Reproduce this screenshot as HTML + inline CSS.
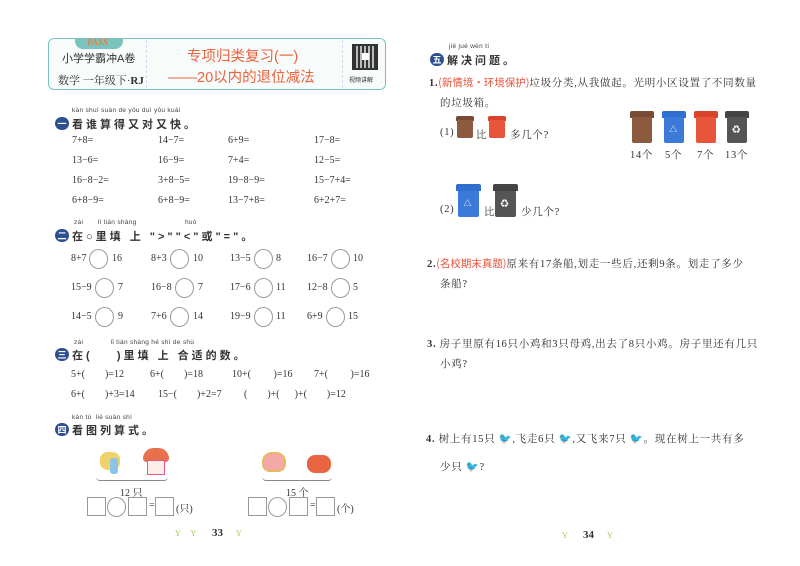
<!DOCTYPE html>
<html><head><meta charset="utf-8"><style>
*{margin:0;padding:0;box-sizing:border-box}
body{width:800px;height:566px;background:#fff;position:relative;overflow:hidden;font-family:"Liberation Serif","Noto Serif CJK SC",serif;color:#333;font-size:10px}
.a{position:absolute;white-space:nowrap}
.r{font-size:10.5px;letter-spacing:.7px}
.s{font-family:"Liberation Sans","Noto Sans CJK SC",sans-serif}
.py{font-family:"Liberation Sans",sans-serif;font-size:6.5px;color:#444;letter-spacing:.3px}
.tt{font-family:"Liberation Sans","Noto Sans CJK SC",sans-serif;font-weight:bold;font-size:11px;letter-spacing:3px;color:#333}
.bd{position:absolute;width:14px;height:13px;border-radius:7px;background:#2f4f93;color:#fff;font-size:9px;line-height:13px;text-align:center;font-family:"Noto Sans CJK SC",sans-serif;font-weight:bold}
.c{position:absolute;width:19px;height:20px;border:1px solid #999;border-radius:50%}
.bx{position:absolute;width:19px;height:19px;border:1px solid #999}
.red{color:#e8533a;font-family:"Noto Sans CJK SC",sans-serif;letter-spacing:0}
.bin{position:absolute}
.bin i{position:absolute;left:0;right:0;top:0;height:22%;border-radius:2px 2px 0 0}
.bin b{position:absolute;left:8%;right:8%;top:20%;bottom:0;border-radius:0 0 2px 2px}
.bin u{position:absolute;left:30%;top:48%;color:#fff;font-size:8px;text-decoration:none;line-height:1}
</style></head><body>
<!-- header -->
<div class="a" style="left:48px;top:38px;width:338px;height:52px;border:1.5px solid #7cc2bc;border-radius:6px;background:#f7fbfa"></div>
<div class="a" style="left:75px;top:38px;width:48px;height:11px;background:#7cc3bd;border-radius:0 0 8px 8px"></div>
<div class="a" style="left:87px;top:37px;font-size:9px;font-weight:bold;color:#e67e3b;font-style:italic">PASS</div>
<div class="a s" style="left:62px;top:50px;font-size:11px;color:#333">小学学霸冲A卷</div>
<div class="a" style="left:58px;top:72px;font-size:11px;color:#333">数学 一年级下·<b>RJ</b></div>
<div class="a" style="left:146px;top:40px;height:48px;border-left:1px dashed #cde"></div>
<div class="a" style="left:342px;top:40px;height:48px;border-left:1px dashed #cde"></div>
<div class="a s" style="left:187px;top:45px;font-size:14.5px;color:#e8643f">专项归类复习(一)</div>
<div class="a s" style="left:168px;top:66px;font-size:14.5px;color:#e8643f">——20以内的退位减法</div>
<div class="a" style="left:352px;top:44px;width:26px;height:26px;background:repeating-linear-gradient(90deg,#333 0 2px,#bbb 2px 4px);border:2px solid #333"></div>
<div class="a" style="left:362px;top:53px;width:7px;height:7px;background:#fff"></div>
<div class="a s" style="left:349px;top:75px;font-size:6px">视频讲解</div>

<!-- 一 -->
<div class="a py" style="left:72px;top:107px">kàn shuí suàn de yōu duì yōu kuài</div>
<div class="bd" style="left:55px;top:117px">一</div>
<div class="a tt" style="left:72px;top:116px">看谁算得又对又快。</div>
<div class="a" style="left:72px;top:135px">7+8=</div><div class="a" style="left:158px;top:135px">14−7=</div><div class="a" style="left:228px;top:135px">6+9=</div><div class="a" style="left:314px;top:135px">17−8=</div>
<div class="a" style="left:72px;top:155px">13−6=</div><div class="a" style="left:158px;top:155px">16−9=</div><div class="a" style="left:228px;top:155px">7+4=</div><div class="a" style="left:314px;top:155px">12−5=</div>
<div class="a" style="left:72px;top:175px">16−8−2=</div><div class="a" style="left:158px;top:175px">3+8−5=</div><div class="a" style="left:228px;top:175px">19−8−9=</div><div class="a" style="left:314px;top:175px">15−7+4=</div>
<div class="a" style="left:72px;top:195px">6+8−9=</div><div class="a" style="left:158px;top:195px">6+8−9=</div><div class="a" style="left:228px;top:195px">13−7+8=</div><div class="a" style="left:314px;top:195px">6+2+7=</div>

<!-- 二 -->
<div class="a py" style="left:74px;top:219px">zài &nbsp;&nbsp;&nbsp;&nbsp;&nbsp;&nbsp;lǐ tián shàng &nbsp;&nbsp;&nbsp;&nbsp;&nbsp;&nbsp;&nbsp;&nbsp;&nbsp;&nbsp;&nbsp;&nbsp;&nbsp;&nbsp;&nbsp;&nbsp;&nbsp;&nbsp;&nbsp;&nbsp;&nbsp;&nbsp;huò</div>
<div class="bd" style="left:55px;top:229px">二</div>
<div class="a tt" style="left:72px;top:228px">在○里填 上 "&gt;""&lt;"或"="。</div>
<div class="a" style="left:71px;top:253px">8+7</div><div class="c" style="left:89px;top:249px"></div><div class="a" style="left:112px;top:253px">16</div>
<div class="a" style="left:151px;top:253px">8+3</div><div class="c" style="left:170px;top:249px"></div><div class="a" style="left:193px;top:253px">10</div>
<div class="a" style="left:230px;top:253px">13−5</div><div class="c" style="left:254px;top:249px"></div><div class="a" style="left:276px;top:253px">8</div>
<div class="a" style="left:307px;top:253px">16−7</div><div class="c" style="left:331px;top:249px"></div><div class="a" style="left:353px;top:253px">10</div>
<div class="a" style="left:71px;top:282px">15−9</div><div class="c" style="left:95px;top:278px"></div><div class="a" style="left:118px;top:282px">7</div>
<div class="a" style="left:151px;top:282px">16−8</div><div class="c" style="left:175px;top:278px"></div><div class="a" style="left:198px;top:282px">7</div>
<div class="a" style="left:230px;top:282px">17−6</div><div class="c" style="left:254px;top:278px"></div><div class="a" style="left:276px;top:282px">11</div>
<div class="a" style="left:307px;top:282px">12−8</div><div class="c" style="left:331px;top:278px"></div><div class="a" style="left:353px;top:282px">5</div>
<div class="a" style="left:71px;top:311px">14−5</div><div class="c" style="left:95px;top:307px"></div><div class="a" style="left:118px;top:311px">9</div>
<div class="a" style="left:151px;top:311px">7+6</div><div class="c" style="left:170px;top:307px"></div><div class="a" style="left:193px;top:311px">14</div>
<div class="a" style="left:230px;top:311px">19−9</div><div class="c" style="left:254px;top:307px"></div><div class="a" style="left:276px;top:311px">11</div>
<div class="a" style="left:307px;top:311px">6+9</div><div class="c" style="left:326px;top:307px"></div><div class="a" style="left:348px;top:311px">15</div>

<!-- 三 -->
<div class="a py" style="left:74px;top:339px">zài &nbsp;&nbsp;&nbsp;&nbsp;&nbsp;&nbsp;&nbsp;&nbsp;&nbsp;&nbsp;&nbsp;&nbsp;lǐ tián shàng hé shì de shù</div>
<div class="bd" style="left:55px;top:348px">三</div>
<div class="a tt" style="left:72px;top:347px">在(&nbsp;&nbsp;&nbsp;&nbsp;)里填 上 合适的数。</div>
<div class="a" style="left:71px;top:369px">5+(&nbsp;&nbsp;&nbsp;&nbsp;&nbsp;&nbsp;&nbsp;&nbsp;)=12</div>
<div class="a" style="left:150px;top:369px">6+(&nbsp;&nbsp;&nbsp;&nbsp;&nbsp;&nbsp;&nbsp;&nbsp;)=18</div>
<div class="a" style="left:232px;top:369px">10+(&nbsp;&nbsp;&nbsp;&nbsp;&nbsp;&nbsp;&nbsp;&nbsp;&nbsp;)=16</div>
<div class="a" style="left:314px;top:369px">7+(&nbsp;&nbsp;&nbsp;&nbsp;&nbsp;&nbsp;&nbsp;&nbsp;&nbsp;)=16</div>
<div class="a" style="left:71px;top:389px">6+(&nbsp;&nbsp;&nbsp;&nbsp;&nbsp;&nbsp;&nbsp;&nbsp;)+3=14</div>
<div class="a" style="left:158px;top:389px">15−(&nbsp;&nbsp;&nbsp;&nbsp;&nbsp;&nbsp;&nbsp;&nbsp;)+2=7</div>
<div class="a" style="left:244px;top:389px">(&nbsp;&nbsp;&nbsp;&nbsp;&nbsp;&nbsp;&nbsp;&nbsp;)+(&nbsp;&nbsp;&nbsp;&nbsp;&nbsp;&nbsp;)+(&nbsp;&nbsp;&nbsp;&nbsp;&nbsp;&nbsp;&nbsp;&nbsp;)=12</div>

<!-- 四 -->
<div class="a py" style="left:72px;top:414px">kàn tú &nbsp;liè suàn shì</div>
<div class="bd" style="left:55px;top:423px">四</div>
<div class="a tt" style="left:72px;top:422px">看图列算式。</div>
<div class="a" style="left:100px;top:452px;width:20px;height:18px;background:#f1d26a;border-radius:40%"></div>
<div class="a" style="left:110px;top:458px;width:8px;height:16px;background:#8cc4e8;border-radius:3px"></div>
<div class="a" style="left:143px;top:448px;width:26px;height:14px;background:#e9704f;border-radius:12px 12px 4px 4px"></div>
<div class="a" style="left:147px;top:460px;width:18px;height:15px;background:#fbeee8;border:1px solid #e58"></div>
<div class="a" style="left:96px;top:477px;width:72px;height:4px;border-bottom:1px solid #888;border-radius:0 0 40px 40px"></div>
<div class="a" style="left:120px;top:484px">12 只</div>
<div class="bx" style="left:87px;top:497px"></div><div class="c" style="left:107px;top:497px"></div><div class="bx" style="left:128px;top:497px"></div>
<div class="a" style="left:149px;top:500px">=</div><div class="bx" style="left:155px;top:497px"></div><div class="a" style="left:176px;top:500px">(只)</div>
<div class="a" style="left:262px;top:452px;width:24px;height:20px;background:#f4a8a8;border:2px solid #e7b85f;border-radius:10px 10px 8px 8px"></div>
<div class="a" style="left:307px;top:455px;width:24px;height:18px;background:#e8663f;border-radius:8px"></div>
<div class="a" style="left:262px;top:477px;width:70px;height:4px;border-bottom:1px solid #888;border-radius:0 0 40px 40px"></div>
<div class="a" style="left:286px;top:484px">15 个</div>
<div class="bx" style="left:248px;top:497px"></div><div class="c" style="left:268px;top:497px"></div><div class="bx" style="left:289px;top:497px"></div>
<div class="a" style="left:310px;top:500px">=</div><div class="bx" style="left:316px;top:497px"></div><div class="a" style="left:337px;top:500px">(个)</div>
<div class="a" style="left:175px;top:529px;color:#9c4;font-size:8px">Y &nbsp;&nbsp;&nbsp;&nbsp;Y</div>
<div class="a" style="left:212px;top:527px;font-weight:bold;font-size:11px">33</div>
<div class="a" style="left:236px;top:529px;color:#9c4;font-size:8px">Y</div>

<!-- right page -->
<div class="a py" style="left:449px;top:43px">jiě jué wèn tí</div>
<div class="bd" style="left:430px;top:53px">五</div>
<div class="a tt" style="left:447px;top:52px">解决问题。</div>
<div class="a r" style="left:429px;top:75px"><b>1.</b><span class="red">(新情境·环境保护)</span>垃圾分类,从我做起。光明小区设置了不同数量</div>
<div class="a r" style="left:440px;top:95px">的垃圾箱。</div>
<div class="a r" style="left:440px;top:127px">(1)</div>
<div class="bin" style="left:456px;top:116px;width:18px;height:22px"><i style="background:#7a4a35"></i><b style="background:#8b5a3f"></b></div>
<div class="a r" style="left:476px;top:127px">比</div>
<div class="bin" style="left:488px;top:116px;width:18px;height:22px"><i style="background:#d9432c"></i><b style="background:#e8553a"></b></div>
<div class="a r" style="left:510px;top:127px">多几个?</div>
<div class="bin" style="left:630px;top:111px;width:24px;height:32px"><i style="background:#7a4a35"></i><b style="background:#8b5a3f"></b></div>
<div class="bin" style="left:662px;top:111px;width:24px;height:32px"><i style="background:#2f6fcf"></i><b style="background:#3b7ad8"></b><u>△</u></div>
<div class="bin" style="left:694px;top:111px;width:24px;height:32px"><i style="background:#d9432c"></i><b style="background:#e8553a"></b></div>
<div class="bin" style="left:725px;top:111px;width:24px;height:32px"><i style="background:#444"></i><b style="background:#555"></b><u>♻</u></div>
<div class="a r" style="left:630px;top:147px">14个</div><div class="a r" style="left:665px;top:147px">5个</div><div class="a r" style="left:697px;top:147px">7个</div><div class="a r" style="left:725px;top:147px">13个</div>
<div class="a r" style="left:440px;top:204px">(2)</div>
<div class="bin" style="left:456px;top:184px;width:25px;height:33px"><i style="background:#2f6fcf"></i><b style="background:#3b7ad8"></b><u>△</u></div>
<div class="a r" style="left:484px;top:204px">比</div>
<div class="bin" style="left:493px;top:184px;width:25px;height:33px"><i style="background:#444"></i><b style="background:#555"></b><u>♻</u></div>
<div class="a r" style="left:521px;top:204px">少几个?</div>

<div class="a r" style="left:427px;top:256px"><b>2.</b><span class="red">(名校期末真题)</span>原来有17条船,划走一些后,还剩9条。划走了多少</div>
<div class="a r" style="left:440px;top:276px">条船?</div>
<div class="a r" style="left:427px;top:336px"><b>3.</b> 房子里原有16只小鸡和3只母鸡,出去了8只小鸡。房子里还有几只</div>
<div class="a r" style="left:440px;top:356px">小鸡?</div>
<div class="a r" style="left:426px;top:431px"><b>4.</b> 树上有15只 <span style="color:#6fa8dc">🐦</span>,飞走6只 <span style="color:#6fa8dc">🐦</span>,又飞来7只 <span style="color:#6fa8dc">🐦</span>。现在树上一共有多</div>
<div class="a r" style="left:440px;top:459px">少只 <span style="color:#6fa8dc">🐦</span>?</div>
<div class="a" style="left:562px;top:531px;color:#9c4;font-size:8px">Y</div>
<div class="a" style="left:583px;top:529px;font-weight:bold;font-size:11px">34</div>
<div class="a" style="left:607px;top:531px;color:#9c4;font-size:8px">Y</div>
</body></html>
